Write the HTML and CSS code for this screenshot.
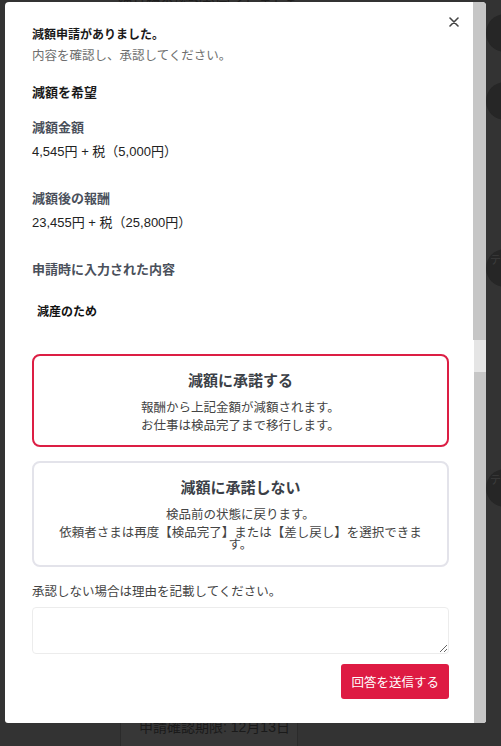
FILE: index.html
```html
<!DOCTYPE html>
<html lang="ja">
<head>
    <meta charset="UTF-8">
    <meta name="viewport" content="width=device-width, initial-scale=1.0">
    <title>減額申請</title>
    <link rel="stylesheet" href="styles.css">
</head>
<body>
    <div class="page">
        <p class="page-notice">納品物の確認が完了しました。</p>
        <div class="side-avatars">
            <span class="avatar"></span>
            <span class="avatar"></span>
            <span class="avatar avatar-text">テン</span>
            <span class="avatar avatar-text">テン</span>
        </div>
        <div class="deadline-box">申請確認期限: 12月13日</div>
    </div>

    <div class="overlay">
        <div class="modal">
            <div class="modal-inner">
                <button class="close" type="button" aria-label="閉じる">
                    <svg width="10" height="10" viewBox="0 0 10 10">
                        <path d="M1 1 L9 9 M9 1 L1 9" stroke="#444" stroke-width="1.6" stroke-linecap="round"/>
                    </svg>
                </button>

                <section class="request">
                    <h2 class="title">減額申請がありました。</h2>
                    <p class="subtitle">内容を確認し、承認してください。</p>

                    <h3 class="kind">減額を希望</h3>

                    <h4 class="label">減額金額</h4>
                    <p class="value">4,545円 + 税（5,000円）</p>

                    <h4 class="label label-gap">減額後の報酬</h4>
                    <p class="value">23,455円 + 税（25,800円）</p>

                    <h4 class="label label-gap">申請時に入力された内容</h4>
                    <p class="reason">減産のため</p>
                </section>

                <form class="answer">
                    <label class="choice choice-selected">
                        <span class="choice-title">減額に承諾する</span>
                        <span class="choice-text">報酬から上記金額が減額されます。</span>
                        <span class="choice-text">お仕事は検品完了まで移行します。</span>
                    </label>
                    <label class="choice">
                        <span class="choice-title">減額に承諾しない</span>
                        <span class="choice-text">検品前の状態に戻ります。</span>
                        <span class="choice-text">依頼者さまは再度【検品完了】または【差し戻し】を選択できます。</span>
                    </label>

                    <p class="note">承認しない場合は理由を記載してください。</p>
                    <textarea class="comment"></textarea>

                    <div class="actions">
                        <button class="submit" type="button">回答を送信する</button>
                    </div>
                </form>
            </div>

            <div class="scrollbar">
                <div class="scrollbar-top"></div>
                <div class="scrollbar-thumb"></div>
                <div class="scrollbar-rest"></div>
            </div>
        </div>
    </div>
</body>
</html>
```

FILE: styles.css
```css
html, body {
    margin: 0;
    height: 100%;
}
body {
    font-family: "Liberation Sans", "Noto Sans CJK JP", sans-serif;
    background-color: #333333;
    color: #222;
    overflow: hidden;
}

/* page behind the dimmed overlay */
.page {
    position: relative;
    height: 746px;
}
.page-notice {
    margin: 0;
    padding-left: 118px;
    font-size: 14px;
    line-height: 8px;
    color: #1e1e1e;
}
.side-avatars {
    position: absolute;
    left: 486px;
    top: 14px;
    display: flex;
    flex-direction: column;
    gap: 30px;
}
.avatar {
    display: block;
    width: 38px;
    height: 38px;
    border-radius: 50%;
    background: #262626;
}
.avatar:nth-child(3) {
    margin-top: 99px;
}
.avatar:nth-child(4) {
    margin-top: 152px;
}
.avatar-text {
    font-size: 11px;
    line-height: 14px;
    color: #3c3c3c;
    padding: 4px 0 0 4px;
    box-sizing: border-box;
    word-break: break-all;
}
.deadline-box {
    position: absolute;
    left: 120px;
    top: 700px;
    width: 178px;
    height: 46px;
    box-sizing: border-box;
    padding: 16px 0 0 18px;
    border-left: 1px solid #2b2b2b;
    border-right: 1px solid #2b2b2b;
    background: #373737;
    font-size: 14px;
    color: #1a1a1a;
}

/* modal */
.overlay {
    position: fixed;
    inset: 0;
}
.modal {
    position: absolute;
    left: 5px;
    top: 2px;
    width: 481px;
    height: 721px;
    display: flex;
    background: #fff;
    border-radius: 4px 4px 3px 3px;
    overflow: hidden;
}
.modal-inner {
    position: relative;
    flex: 1;
    padding: 23px 24px 0 27px;
}
.close {
    position: absolute;
    top: 13px;
    right: 12px;
    width: 14px;
    height: 14px;
    padding: 2px;
    border: none;
    background: none;
    cursor: pointer;
}
.close svg {
    display: block;
}

.scrollbar {
    width: 13px;
    display: flex;
    flex-direction: column;
}
.scrollbar-top {
    height: 338px;
    background: #c6c6c6;
}
.scrollbar-thumb {
    height: 32px;
    margin-left: 1px;
    background: #e5e5e5;
}
.scrollbar-rest {
    flex: 1;
    margin-left: 1px;
    background: #c6c6c6;
}

/* request summary */
.request {
    height: 315px;
}
.title, .subtitle, .kind, .label, .value, .reason {
    margin: 0;
    font-size: 13px;
    line-height: 20px;
}
.title {
    font-size: 12px;
    font-weight: 700;
    color: #1a1a1a;
}
.subtitle {
    margin-top: 1px;
    font-size: 12.5px;
    color: #6e6e6e;
}
.kind {
    margin-top: 17px;
    font-weight: 700;
    color: #1a1a1a;
}
.label {
    margin-top: 15px;
    font-weight: 700;
    color: #4a505b;
}
.label-gap {
    margin-top: 27px;
}
.value {
    margin-top: 4px;
    color: #222;
}
.reason {
    margin-top: 22px;
    padding-left: 5px;
    font-size: 12px;
    font-weight: 700;
    color: #111;
}

/* answer form */
.answer {
    padding-top: 14px;
}
.choice {
    display: flex;
    flex-direction: column;
    align-items: center;
    text-align: center;
    padding: 15px 24px 13px;
    border: 2px solid #e3e3ea;
    border-radius: 8px;
    cursor: pointer;
}
.choice + .choice {
    margin-top: 14px;
}
.choice-selected {
    border-color: #dc1e44;
}
.choice-title {
    font-size: 15px;
    line-height: 20px;
    font-weight: 700;
    color: #3b3f47;
    margin-bottom: 6px;
}
.choice-text {
    font-size: 12.5px;
    line-height: 12.5px;
    color: #444;
    margin-top: 5px;
}
.note {
    margin: 15px 0 0;
    font-size: 12.5px;
    line-height: 20px;
    color: #444;
}
.comment {
    display: block;
    width: 100%;
    height: 47px;
    margin-top: 5px;
    box-sizing: border-box;
    border: 1px solid #ececec;
    border-radius: 4px;
    font-family: inherit;
    font-size: 13px;
}
.actions {
    display: flex;
    justify-content: flex-end;
    margin-top: 10px;
}
.submit {
    height: 35px;
    padding: 0 10px;
    border: none;
    border-radius: 3px;
    background-color: #de1b43;
    color: #fff;
    font-family: inherit;
    font-size: 12.5px;
    cursor: pointer;
}
```
